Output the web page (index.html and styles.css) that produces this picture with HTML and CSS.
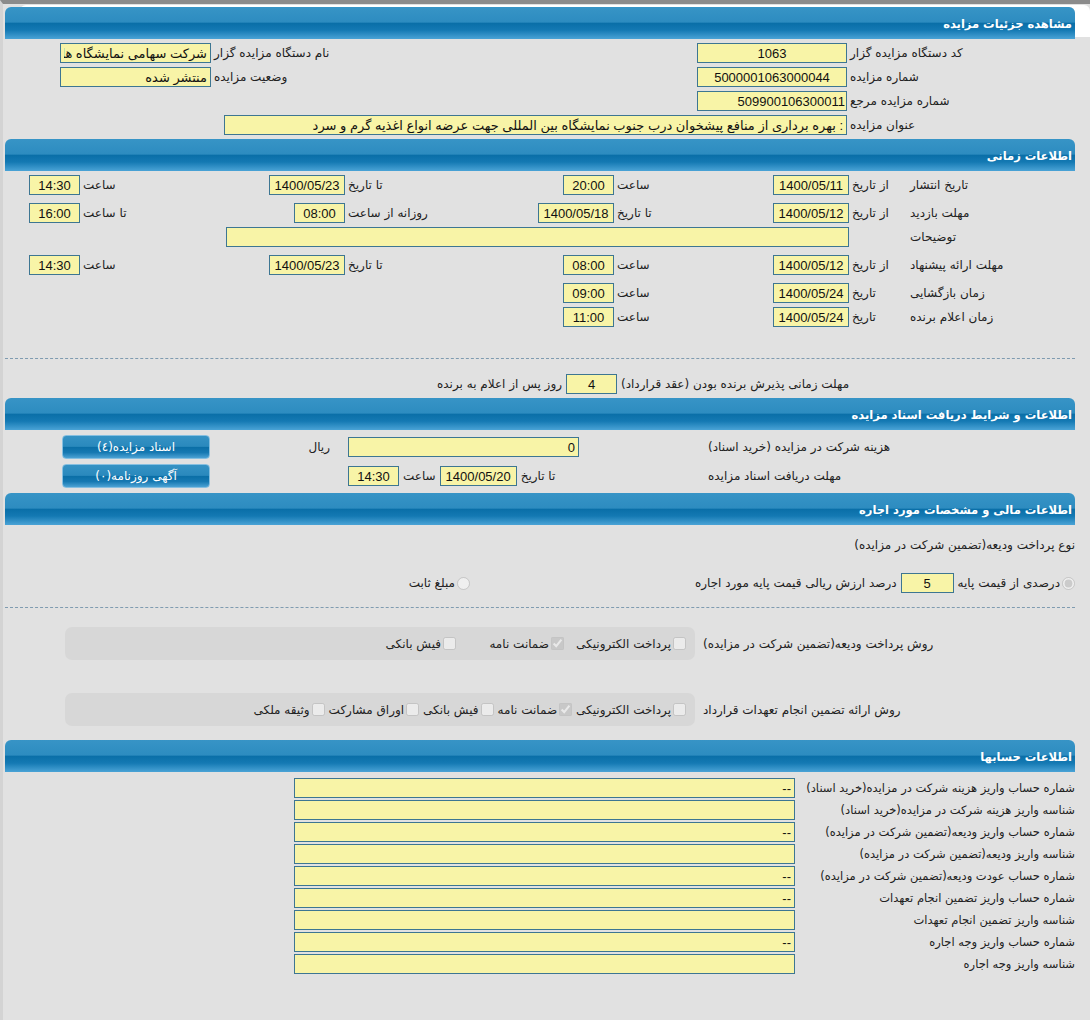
FILE: index.html
```html
<!DOCTYPE html>
<html lang="fa" dir="rtl">
<head>
<meta charset="utf-8">
<title>مشاهده جزئیات مزایده</title>
<link rel="stylesheet" href="styles.css">
</head>
<body>
<div class="page">

  <section class="sec sec-main">
    <div class="bar bar-first">مشاهده جزئیات مزایده</div>
    <div class="grid-main">
      <span class="lbl">کد دستگاه مزایده گزار</span>
      <input class="fld w150 c" value="1063" readonly>
      <span class="lbl">نام دستگاه مزایده گزار</span>
      <input class="fld w151" value="شرکت سهامی نمایشگاه های بین المللی" readonly>

      <span class="lbl">شماره مزایده</span>
      <input class="fld w150 c" value="5000001063000044" readonly>
      <span class="lbl">وضعیت مزایده</span>
      <input class="fld w151" value="منتشر شده" readonly>

      <span class="lbl">شماره مزایده مرجع</span>
      <input class="fld w150 ltr-end" value="509900106300011" readonly>
      <span></span><span></span>

      <span class="lbl">عنوان مزایده</span>
      <input class="fld wtitle span2" value=": بهره برداری از منافع پیشخوان درب جنوب نمایشگاه بین المللی جهت عرضه انواع اغذیه گرم و سرد" readonly>
    </div>
  </section>

  <section class="sec sec-time">
    <div class="bar">اطلاعات زمانی</div>
    <div class="grid-time first-row">
      <span class="lbl">تاریخ انتشار</span>
      <span class="lbl">از تاریخ</span>
      <input class="fld wdate c" value="1400/05/11" readonly>
      <span class="lbl">ساعت</span>
      <input class="fld wtime c" value="20:00" readonly>
      <span class="lbl">تا تاریخ</span>
      <input class="fld wdate c" value="1400/05/23" readonly>
      <span class="lbl">ساعت</span>
      <input class="fld wtime c" value="14:30" readonly>
    </div>
    <div class="grid-time gap4">
      <span class="lbl">مهلت بازدید</span>
      <span class="lbl">از تاریخ</span>
      <input class="fld wdate c" value="1400/05/12" readonly>
      <span class="lbl">تا تاریخ</span>
      <input class="fld wdate c" value="1400/05/18" readonly>
      <span class="lbl">روزانه از ساعت</span>
      <input class="fld wtime c" value="08:00" readonly>
      <span class="lbl">تا ساعت</span>
      <input class="fld wtime c" value="16:00" readonly>
    </div>
    <div class="grid-time">
      <span class="lbl">توضیحات</span>
      <span></span>
      <input class="fld wdesc desc" value="" readonly>
    </div>
    <div class="grid-time gap4">
      <span class="lbl">مهلت ارائه پیشنهاد</span>
      <span class="lbl">از تاریخ</span>
      <input class="fld wdate c" value="1400/05/12" readonly>
      <span class="lbl">ساعت</span>
      <input class="fld wtime c" value="08:00" readonly>
      <span class="lbl">تا تاریخ</span>
      <input class="fld wdate c" value="1400/05/23" readonly>
      <span class="lbl">ساعت</span>
      <input class="fld wtime c" value="14:30" readonly>
    </div>
    <div class="grid-time gap4">
      <span class="lbl">زمان بازگشایی</span>
      <span class="lbl">تاریخ</span>
      <input class="fld wdate c" value="1400/05/24" readonly>
      <span class="lbl">ساعت</span>
      <input class="fld wtime c" value="09:00" readonly>
    </div>
    <div class="grid-time">
      <span class="lbl">زمان اعلام برنده</span>
      <span class="lbl">تاریخ</span>
      <input class="fld wdate c" value="1400/05/24" readonly>
      <span class="lbl">ساعت</span>
      <input class="fld wtime c" value="11:00" readonly>
    </div>

    <div class="dash dash-time"></div>

    <div class="accept-row">
      <span class="lbl accept-lbl">مهلت زمانی پذیرش برنده بودن (عقد قرارداد)</span>
      <input class="fld wtime c" value="4" readonly>
      <span class="accept-tail">روز پس از اعلام به برنده</span>
    </div>
  </section>

  <section class="sec sec-docs">
    <div class="bar">اطلاعات و شرایط دریافت اسناد مزایده</div>
    <div class="grid-docs">
      <span class="lbl">هزینه شرکت در مزایده (خرید اسناد)</span>
      <div class="cell-end"><input class="fld wcost" value="0" readonly></div>
      <span class="rial">ریال</span>
      <button class="btn" type="button">اسناد مزایده(٤)</button>
    </div>
    <div class="grid-docs row2">
      <span class="lbl">مهلت دریافت اسناد مزایده</span>
      <div class="cell-end">
        <span>تا تاریخ</span>
        <input class="fld wdate2 c" value="1400/05/20" readonly>
        <span>ساعت</span>
        <input class="fld wtime c" value="14:30" readonly>
      </div>
      <span></span>
      <button class="btn" type="button">آگهی روزنامه(٠)</button>
    </div>
  </section>

  <section class="sec sec-fin">
    <div class="bar">اطلاعات مالی و مشخصات مورد اجاره</div>
    <div class="fin-title">نوع پرداخت ودیعه(تضمین شرکت در مزایده)</div>
    <div class="radio-row">
      <label class="opt opt-percent">
        <input type="radio" name="dep" class="rd" checked disabled>درصدی از قیمت پایه
        <input class="fld wtime c pct" value="5" readonly>
        درصد ارزش ریالی قیمت پایه مورد اجاره
      </label>
      <label class="opt opt-fixed">
        <input type="radio" name="dep" class="rd" disabled>مبلغ ثابت
      </label>
    </div>

    <div class="dash dash-fin"></div>

    <div class="box-row">
      <span class="lbl box-lbl">روش پرداخت ودیعه(تضمین شرکت در مزایده)</span>
      <div class="box box-a">
        <label class="chk c1"><input type="checkbox" disabled> پرداخت الکترونیکی</label>
        <label class="chk c2"><input type="checkbox" checked disabled>ضمانت نامه</label>
        <label class="chk c3"><input type="checkbox" disabled>فیش بانکی</label>
      </div>
    </div>
    <div class="box-row box-row2">
      <span class="lbl box-lbl">روش ارائه تضمین انجام تعهدات قرارداد</span>
      <div class="box box-b">
        <label class="chk"><input type="checkbox" disabled>پرداخت الکترونیکی</label>
        <label class="chk"><input type="checkbox" checked disabled>ضمانت نامه</label>
        <label class="chk"><input type="checkbox" disabled>فیش بانکی</label>
        <label class="chk"><input type="checkbox" disabled>اوراق مشارکت</label>
        <label class="chk"><input type="checkbox" disabled>وثیقه ملکی</label>
      </div>
    </div>
  </section>

  <section class="sec sec-acc">
    <div class="bar">اطلاعات حسابها</div>
    <div class="grid-acc">
      <span class="albl">شماره حساب واریز هزینه شرکت در مزایده(خرید اسناد)</span>
      <input class="fld wacc" value="--" readonly>
      <span class="albl">شناسه واریز هزینه شرکت در مزایده(خرید اسناد)</span>
      <input class="fld wacc" value="" readonly>
      <span class="albl">شماره حساب واریز ودیعه(تضمین شرکت در مزایده)</span>
      <input class="fld wacc" value="--" readonly>
      <span class="albl">شناسه واریز ودیعه(تضمین شرکت در مزایده)</span>
      <input class="fld wacc" value="" readonly>
      <span class="albl">شماره حساب عودت ودیعه(تضمین شرکت در مزایده)</span>
      <input class="fld wacc" value="--" readonly>
      <span class="albl">شماره حساب واریز تضمین انجام تعهدات</span>
      <input class="fld wacc" value="--" readonly>
      <span class="albl">شناسه واریز تضمین انجام تعهدات</span>
      <input class="fld wacc" value="" readonly>
      <span class="albl">شماره حساب واریز وجه اجاره</span>
      <input class="fld wacc" value="--" readonly>
      <span class="albl">شناسه واریز وجه اجاره</span>
      <input class="fld wacc" value="" readonly>
    </div>
  </section>

</div>
</body>
</html>
```

FILE: styles.css
```css
* {
  box-sizing: border-box;
}

html, body {
  margin: 0;
  padding: 0;
}

body {
  background: #e1e1e1;
  border-top: 4px solid #8b8b8b;
  border-left: 3px solid #d3d3d3;
  font-family: "DejaVu Sans", "Noto Sans", sans-serif;
  font-size: 12px;
  color: #222;
  direction: rtl;
  min-height: 1020px;
}

.page {
  width: 1070px;
  margin: 0 auto 0 2px;
  padding-top: 3px;
}

/* header bars */
.bar {
  height: 32px;
  border-radius: 6px 6px 0 0;
  background: linear-gradient(to bottom, #3794c6 0%, #2d8cc0 47%, #0a6fa8 51%, #1479b3 72%, #4aa3d6 100%);
  color: #fff;
  font-weight: bold;
  font-size: 11.5px;
  padding: 0 3px 0 0;
  line-height: 34px;
  white-space: nowrap;
}

.bar-first {
  box-shadow: 15px -2px 0 #fff;
}

/* form field */
.fld {
  display: block;
  height: 20px;
  margin: 0;
  padding: 0 3px;
  border: 1px solid #3d7692;
  background: #f8f4a7;
  color: #111;
  font-family: "Liberation Sans", "DejaVu Sans", sans-serif;
  font-size: 13px;
  direction: rtl;
  text-align: right;
  outline: none;
}

.fld.c { text-align: center; }
.fld.ltr-end { text-align: right; padding-right: 1px; }

.w150 { width: 150px; }
.w151 { width: 151px; }
.wtitle { width: 623px; }
.wdate { width: 76px; }
.wdate2 { width: 77px; }
.wtime { width: 51px; }
.wdesc { width: 623px; }
.wcost { width: 231px; }
.wacc { width: 501px; }

.lbl {
  text-align: left;
  white-space: nowrap;
  padding-left: 3px;
}

/* section 1 */
.grid-main {
  display: grid;
  grid-template-columns: 228px 150px 486px 151px;
  grid-auto-rows: 24px;
  align-items: center;
  padding: 2px 0 2px;
}

.span2 { grid-column: span 2; }

/* time section */
.grid-time {
  display: grid;
  grid-template-columns: 165px 61px 78px 157px 76px 193px 77px 188px 53px;
  height: 24px;
  align-items: center;
}

.grid-time.first-row { margin-top: 2px; }
.grid-time.gap4 { margin-top: 4px; }

.grid-time > .lbl:first-child { padding-left: 0; }
.grid-time .desc { grid-column: 3 / span 5; }

.dash {
  border-top: 1px dashed #7f9bb0;
  height: 0;
}

.dash-time { margin-top: 29px; }

.accept-row {
  display: flex;
  align-items: center;
  height: 24px;
  margin-top: 13px;
}

.accept-lbl {
  width: 458px;
  padding-left: 4px;
}

.accept-tail {
  padding-right: 4px;
  white-space: nowrap;
}

/* docs section */
.sec-docs { margin-top: 2px; }

.grid-docs {
  display: grid;
  grid-template-columns: 370px 357px 138px 148px;
  height: 28px;
  align-items: center;
  margin-top: 3px;
}

.grid-docs.row2 { margin-top: 1px; }

.cell-end {
  display: flex;
  align-items: center;
  justify-content: flex-end;
  gap: 4px;
  white-space: nowrap;
}

.rial {
  padding-right: 18px;
}

.btn {
  width: 148px;
  height: 24px;
  border: 1px solid #86bfe0;
  border-radius: 4px;
  background: linear-gradient(to bottom, #3592c4 0%, #2a89bd 47%, #0b6fa7 52%, #1679b2 75%, #4ba2d4 100%);
  color: #fff;
  font-family: "DejaVu Sans", "Noto Sans", sans-serif;
  font-size: 12px;
  padding: 0;
  direction: rtl;
}

/* finance section */
.sec-fin { margin-top: 3px; }

.fin-title {
  height: 24px;
  line-height: 24px;
  margin-top: 8px;
  white-space: nowrap;
}

.radio-row {
  display: flex;
  align-items: center;
  height: 24px;
  margin-top: 14px;
  white-space: nowrap;
}

.opt {
  display: flex;
  align-items: center;
}

.opt-percent { width: 605px; }

.rd {
  width: 13px;
  height: 13px;
  margin: 0 0 0 2px;
}

.pct {
  margin: 0 4px;
  width: 53px;
}

.dash-fin { margin-top: 12px; }

.box-row {
  display: flex;
  align-items: center;
  margin-top: 19px;
}

.box-row2 { margin-top: 33px; }

.box-lbl {
  width: 380px;
  padding-left: 8px;
}

.box {
  width: 630px;
  height: 33px;
  background: #d7d7d7;
  border-radius: 7px;
  display: flex;
  align-items: center;
  padding-right: 9px;
  white-space: nowrap;
}

.chk {
  display: flex;
  align-items: center;
}

.chk input {
  width: 13px;
  height: 13px;
  margin: 0 0 0 2px;
}

.box-a .c1 { width: 122px; }
.box-a .c2 { width: 108px; }

.box-b .chk { margin-left: 4px; }

/* accounts */
.sec-acc { margin-top: 14px; }

.grid-acc {
  display: grid;
  grid-template-columns: 280px 501px;
  grid-auto-rows: 22px;
  align-items: center;
  padding-top: 5px;
}

.albl {
  white-space: nowrap;
  text-align: right;
  font-size: 11.5px;
}
```
